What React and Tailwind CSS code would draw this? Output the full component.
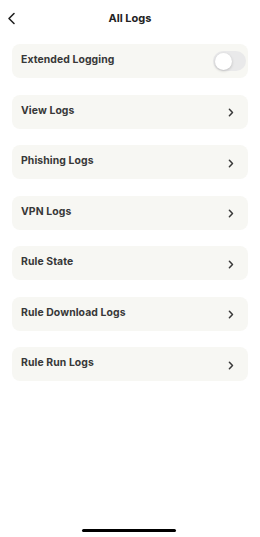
import React from "react";

const Chevron = () => (
  <svg width="6" height="9" viewBox="0 0 6 9" fill="none" className="shrink-0 mt-[4px]">
    <path d="M1.4 1.2 L4.5 4.5 L1.4 7.8" stroke="#3a3a3a" strokeWidth="1.5" strokeLinecap="round" strokeLinejoin="round" />
  </svg>
);

const Row = ({ label, children }) => (
  <div className="flex h-[34px] items-center justify-between rounded-[8px] bg-[#f7f7f3] pb-[2px] pl-[9px] pr-[14px]">
    <span className="text-[10.4px] font-bold tracking-[0.1px] text-[#383838]">{label}</span>
    {children}
  </div>
);

export default function App() {
  const items = ["View Logs", "Phishing Logs", "VPN Logs", "Rule State", "Rule Download Logs", "Rule Run Logs"];
  return (
    <div className="relative flex h-[537px] w-[260px] flex-col bg-white" style={{ fontFamily: "Inter, 'Noto Sans', sans-serif" }}>
      <div className="relative flex h-[37px] items-center justify-center">
        <svg width="9" height="14" viewBox="0 0 9 14" fill="none" className="absolute left-[7px] top-[12px]">
          <path d="M7 1.5 L2 6.5 L7 11.5" stroke="#222" strokeWidth="1.6" strokeLinecap="round" strokeLinejoin="round" />
        </svg>
        <span className="text-[11px] font-bold text-[#222222]">All Logs</span>
      </div>
      <div className="mx-[12px] mt-[7px] flex flex-col gap-[16.5px]">
        <Row label="Extended Logging">
          <div className="-mr-[12px] mt-[2px] flex h-[20px] w-[33px] items-center rounded-full bg-[#e9e9ea] p-[1.5px]">
            <div className="h-[17px] w-[17px] rounded-full bg-white shadow-[0_1px_3px_rgba(0,0,0,0.2)]" />
          </div>
        </Row>
        {items.map((l) => (
          <Row key={l} label={l}>
            <Chevron />
          </Row>
        ))}
      </div>
      <div className="absolute bottom-[5px] left-[82px] h-[3px] w-[94px] rounded-full bg-black" />
    </div>
  );
}
